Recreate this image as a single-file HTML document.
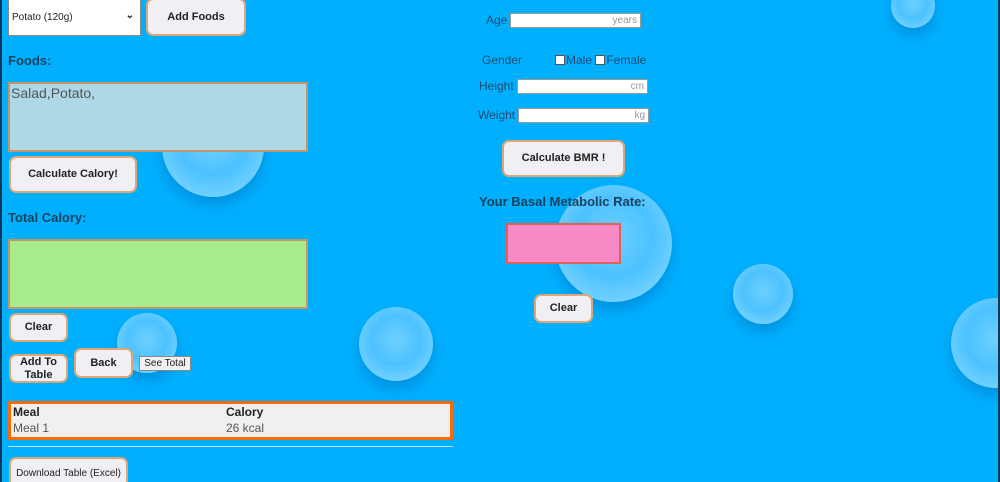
<!DOCTYPE html>
<html><head><meta charset="utf-8"><style>
*{box-sizing:border-box;margin:0;padding:0}
html,body{width:1000px;height:482px;overflow:hidden}
body{background:#00b0ff;font-family:"Liberation Sans",Arial,sans-serif;position:relative}
.a{position:absolute}
.bub{position:absolute;border-radius:50%;background:radial-gradient(circle at 50% 45%,#6fd0ff 0%,#4cc2ff 45%,#7fd6ff 85%,#c6ecff 100%);box-shadow:0 8px 14px rgba(0,90,160,.35)}
.btn{position:absolute;background:#f0eff3;border:2px solid #e0a577;border-radius:7px;font-weight:bold;color:#222;font-size:11px;display:flex;align-items:center;justify-content:center;text-align:center;line-height:13px}
.h{position:absolute;font-weight:bold;color:#16425e;font-size:13px}
.lab{position:absolute;color:#1a4d72;font-size:12px}
.inp{position:absolute;background:#fff;border:1px solid #999;height:15px;font-size:10px;color:#999;text-align:right;padding-right:3px;line-height:13px}
.cb{display:inline-block;width:10px;height:10px;background:#fff;border:1px solid #555;vertical-align:-1px;margin-right:1px}
</style></head><body>
<div class="a" style="left:0;top:0;width:2px;height:482px;background:#0a3a55"></div>
<div class="a" style="left:998px;top:0;width:2px;height:482px;background:#0a3a55;z-index:5"></div>
<div class="bub" style="left:162px;top:95px;width:102px;height:102px"></div>
<div class="bub" style="left:117px;top:313px;width:60px;height:60px"></div>
<div class="bub" style="left:359px;top:307px;width:74px;height:74px"></div>
<div class="bub" style="left:891px;top:-16px;width:44px;height:44px"></div>
<div class="bub" style="left:555px;top:185px;width:117px;height:117px"></div>
<div class="bub" style="left:733px;top:264px;width:60px;height:60px"></div>
<div class="bub" style="left:951px;top:298px;width:90px;height:90px"></div>

<div class="a" style="left:8px;top:-4px;width:133px;height:40px;background:#fff;border:1px solid #888;font-size:10px;color:#222;padding:15px 3px">Potato (120g)<span style="position:absolute;right:6px;top:13px;font-size:10px;font-weight:bold">&#8964;</span></div>
<div class="btn" style="left:146px;top:-2px;width:100px;height:38px">Add Foods</div>
<div class="h" style="left:8px;top:53px">Foods:</div>
<div class="a" style="left:8px;top:82px;width:300px;height:70px;background:#add8e6;border:2px solid #c79468;color:#555;font-size:14px;padding:1px 1px">Salad,Potato,</div>
<div class="btn" style="left:9px;top:156px;width:128px;height:37px">Calculate Calory!</div>
<div class="h" style="left:8px;top:210px">Total Calory:</div>
<div class="a" style="left:8px;top:239px;width:300px;height:70px;background:#a6ec8d;border:2px solid #c79468"></div>
<div class="btn" style="left:9px;top:313px;width:59px;height:29px">Clear</div>
<div class="btn" style="left:9px;top:354px;width:59px;height:29px">Add To<br>Table</div>
<div class="btn" style="left:74px;top:348px;width:59px;height:30px">Back</div>
<div class="a" style="left:139px;top:356px;width:52px;height:15px;background:#f0f0f0;border:1px solid #888;font-size:10px;color:#222;text-align:center;line-height:13px">See Total</div>
<div class="a" style="left:8px;top:401px;width:445px;height:39px;background:#f2eff3;border:3px solid #ff6a00;font-size:12px;line-height:15px;padding:2px 2px">
<div style="position:absolute;left:2px;top:1px;font-weight:bold;color:#222">Meal</div>
<div style="position:absolute;left:215px;top:1px;font-weight:bold;color:#222">Calory</div>
<div style="position:absolute;left:2px;top:17px;color:#555">Meal 1</div>
<div style="position:absolute;left:215px;top:17px;color:#555">26 kcal</div>
</div>
<div class="a" style="left:8px;top:446px;width:445px;height:1px;background:#b8e4ff"></div>
<div class="btn" style="left:9px;top:457px;width:119px;height:32px;font-weight:normal;font-size:10px">Download Table (Excel)</div>

<div class="lab" style="left:486px;top:13px">Age</div>
<div class="inp" style="left:510px;top:13px;width:131px">years</div>
<div class="lab" style="left:482px;top:53px">Gender</div>
<div class="lab" style="left:555px;top:53px"><span class="cb"></span>Male <span class="cb"></span>Female</div>
<div class="lab" style="left:479px;top:79px">Height</div>
<div class="inp" style="left:517px;top:79px;width:131px">cm</div>
<div class="lab" style="left:478px;top:108px">Weight</div>
<div class="inp" style="left:518px;top:108px;width:131px">kg</div>
<div class="btn" style="left:502px;top:140px;width:123px;height:37px">Calculate BMR !</div>
<div class="h" style="left:479px;top:194px">Your Basal Metabolic Rate:</div>
<div class="a" style="left:506px;top:223px;width:115px;height:41px;background:#f78ac6;border:2px solid #e0605a"></div>
<div class="btn" style="left:534px;top:294px;width:59px;height:29px">Clear</div>
</body></html>
